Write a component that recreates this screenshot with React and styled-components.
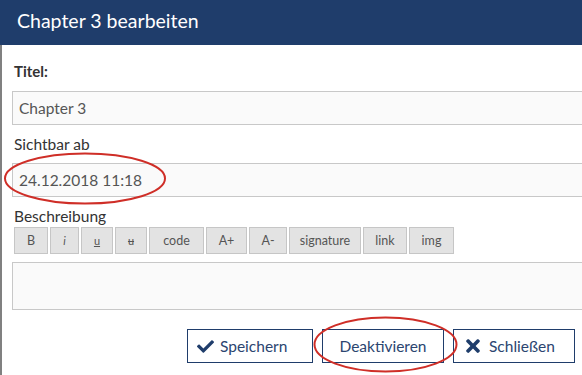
import React from 'react';
import styled, { createGlobalStyle } from 'styled-components';
import { FaCheck, FaTimes } from 'react-icons/fa';

const GlobalStyle = createGlobalStyle`
  html, body {
    margin: 0;
    padding: 0;
    background: #fff;
    overflow: hidden;
  }
  body {
    font-family: Lato, "Open Sans", "Liberation Sans", sans-serif;
  }
`

const TOOLS = [
  { label: 'B', w: 34 },
  { label: 'i', w: 29, italic: true },
  { label: 'u', w: 32, underline: true },
  { label: 'u', w: 32, strike: true },
  { label: 'code', w: 55 },
  { label: 'A+', w: 41 },
  { label: 'A-', w: 38 },
  { label: 'signature', w: 72 },
  { label: 'link', w: 44 },
  { label: 'img', w: 45 },
]

export default function App() {

  // HTML ============

  return (
    <Dialog>
      <GlobalStyle />
      <Header>Chapter 3 bearbeiten</Header>
      <Body>
        <BoldLabel>Titel:</BoldLabel>
        <Field>Chapter 3</Field>

        <Label>Sichtbar ab</Label>
        <Marked>
          <Field>24.12.2018 11:18</Field>
          <Ellipse width="164" height="53" style={{ left: -9, top: -11 }}>
            <ellipse cx="82" cy="26.5" rx="80" ry="25" />
          </Ellipse>
        </Marked>

        <Label>Beschreibung</Label>
        <Toolbar>
          {TOOLS.map((t, i) => (
            <Tool key={i} $w={t.w} $small={t.italic || t.underline || t.strike} $italic={t.italic} $underline={t.underline} $strike={t.strike}>
              {t.label}
            </Tool>
          ))}
        </Toolbar>
        <TextArea />

        <Footer>
          <Button $w={126} $icon>
            <FaCheck size={17} />
            Speichern
          </Button>
          <Marked>
            <Button $w={122}>Deaktivieren</Button>
            <Ellipse width="145" height="57" style={{ left: -9, top: -13 }}>
              <ellipse cx="72.5" cy="28.5" rx="71" ry="27" />
            </Ellipse>
          </Marked>
          <Button $w={122} $icon>
            <FaTimes size={20} />
            Schließen
          </Button>
        </Footer>
      </Body>
    </Dialog>
  )
}

// Styled ============

const Dialog = styled.div`
  width: 582px;
  height: 375px;
  overflow: hidden;
  background: #fff;
`

const Header = styled.div`
  height: 45px;
  background: #1f3d6b;
  color: #fff;
  font-size: 19.5px;
  line-height: 42px;
  padding-left: 17px;
  box-sizing: border-box;
`

const Body = styled.div`
  height: 330px;
  border-left: 2px solid #808080;
  padding: 16px 0 0 10px;
  box-sizing: border-box;
  display: flex;
  flex-direction: column;
`

const BoldLabel = styled.div`
  font-size: 15px;
  font-weight: 700;
  color: #333;
  line-height: 20px;
  padding-left: 2px;
  margin-bottom: 10px;
`

const Label = styled.div`
  font-size: 15.5px;
  color: #333;
  line-height: 20px;
  padding-left: 2px;
  margin: 9px 0 9px;
`

const Field = styled.div`
  height: 34px;
  margin-right: -30px;
  box-sizing: border-box;
  border: 1px solid #c8c8c8;
  background: #fafafa;
  color: #555;
  font-size: 15.5px;
  line-height: 32px;
  padding-left: 6px;
`

const Marked = styled.div`
  position: relative;
`

const Ellipse = styled.svg`
  position: absolute;
  pointer-events: none;
  overflow: visible;
  ellipse {
    fill: none;
    stroke: #cf2e27;
    stroke-width: 2;
  }
`

const Toolbar = styled.div`
  display: flex;
  gap: 2px;
  padding-left: 2px;
  margin-top: -8px;
`

const Tool = styled.div`
  width: ${p => p.$w}px;
  height: 27px;
  box-sizing: border-box;
  border: 1px solid #c6c6c6;
  background: #e3e3e3;
  color: #555;
  font-size: ${p => p.$small ? '11px' : '12.5px'};
  font-style: ${p => p.$italic ? 'italic' : 'normal'};
  text-decoration: ${p => p.$underline ? 'underline' : p.$strike ? 'line-through' : 'none'};
  display: flex;
  align-items: center;
  justify-content: center;
`

const TextArea = styled.div`
  height: 48px;
  margin: 8px -30px 0 0;
  box-sizing: border-box;
  border: 1px solid #c8c8c8;
  background: #fafafa;
`

const Footer = styled.div`
  display: flex;
  justify-content: flex-end;
  gap: 9px;
  padding-right: 7px;
  margin-top: 19px;
`

const Button = styled.button`
  width: ${p => p.$w}px;
  height: 34px;
  box-sizing: border-box;
  border: 1px solid #1f3d6b;
  background: #fff;
  color: #2b4570;
  font-family: Lato, "Liberation Sans", sans-serif;
  font-size: 15.5px;
  display: flex;
  align-items: center;
  justify-content: ${p => p.$icon ? 'flex-start' : 'center'};
  gap: 6px;
  padding: 0 0 0 ${p => p.$icon ? '9px' : '0'};
  svg {
    color: #1f3d6b;
  }
`
